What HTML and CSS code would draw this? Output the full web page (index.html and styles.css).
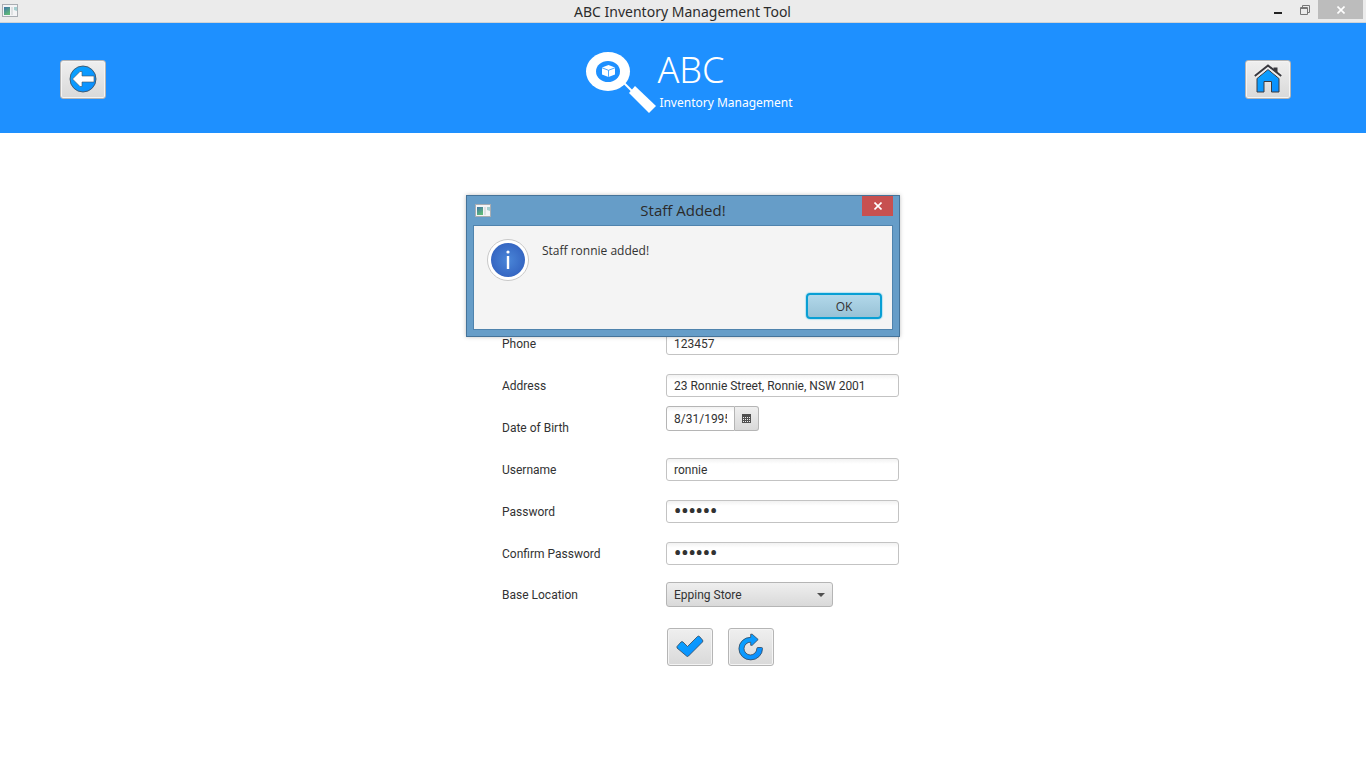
FILE: index.html
```
<!DOCTYPE html>
<html lang="en">
<head>
<meta charset="utf-8">
<title>ABC Inventory Management Tool</title>
<link rel="stylesheet" href="styles.css">
</head>
<body>
<svg class="defs" aria-hidden="true">
  <defs>
    <linearGradient id="pane" x1="0" y1="0" x2="0.5" y2="1"><stop offset="0" stop-color="#3f74a8"/><stop offset="1" stop-color="#5fb878"/></linearGradient>
    <linearGradient id="azure" x1="0" y1="0" x2="1" y2="1"><stop offset="0" stop-color="#0aa5ff"/><stop offset="1" stop-color="#0a8cff"/></linearGradient>
    <radialGradient id="info"><stop offset="0" stop-color="#4a86d8"/><stop offset="1" stop-color="#3566c2"/></radialGradient>
    <symbol id="app" viewBox="0 0 16 13">
      <rect x="0.5" y="0.5" width="15" height="12" fill="#f4f4f6" stroke="#a9adb2"/>
      <rect x="2" y="3" width="6" height="8" fill="url(#pane)"/>
      <rect x="9" y="3" width="2" height="8" fill="#dfe1e3"/>
      <path d="M12 3h3v4l-3-1z" fill="#a5cfd0"/>
    </symbol>
  </defs>
</svg>

<header class="titlebar">
  <svg class="app-icon" aria-hidden="true"><use href="#app"/></svg>
  <h1 class="window-title">ABC Inventory Management Tool</h1>
  <div class="window-controls">
    <button class="win-btn win-min" aria-label="Minimize"><svg width="8" height="10"><path d="M0 8h8" stroke="#222" stroke-width="2"/></svg></button>
    <button class="win-btn win-restore" aria-label="Restore"><svg width="10" height="10" fill="none" stroke="#777"><path d="M2.500 2.500v-2h7v7h-2"/><path d="M.5 2.500h7v7h-7zM1 3.500h6"/></svg></button>
    <button class="win-btn win-close" aria-label="Close"><svg width="8" height="8" stroke="#fff" stroke-width="1.600"><path d="M.5.5l7 7M7.5.5l-7 7"/></svg></button>
  </div>
</header>

<nav class="banner">
  <button class="icon-btn" aria-label="Back">
    <svg width="28" height="30" viewBox="0 0 28 30"><circle cx="14" cy="14" r="13" fill="url(#azure)" stroke="#3d5468" stroke-width=".9"/><path d="M3.500 14l7.500-7.500h2v4.500h12v6h-12v4.500h-2z" fill="#fff" stroke="#45525e" stroke-width=".6"/></svg>
  </button>
  <div class="logo">
    <svg class="logo-mark" width="71" height="62" viewBox="0 0 71 62" aria-hidden="true">
      <path d="M38 31l8 8" stroke="#fff" stroke-width="2"/>
      <ellipse cx="22" cy="19.500" rx="22" ry="19.500" fill="#fff"/>
      <ellipse cx="22" cy="19.500" rx="12" ry="10.500" fill="#1e90ff"/>
      <path d="M16 15.500l6.500-2.500 6.500 2.500v7l-6.500 2.500-6.500-2.500z" fill="#fff"/>
      <path d="M16 15.800l6.500 2.500 6.500-2.500M22.500 18.300v6.500" fill="none" stroke="#1e90ff" stroke-width=".8"/>
      <path d="M43 41l6-7 21 20-7 7z" fill="#fff"/>
    </svg>
    <div class="logo-text">
      <span class="logo-name">ABC</span>
      <span class="logo-sub">Inventory Management</span>
    </div>
  </div>
  <button class="icon-btn" aria-label="Home">
    <svg width="28" height="31" viewBox="0 0 28 31"><path d="M3 14.500L14 5.500l11 9V28h-7.500V17.500h-7.500V28H3z" fill="url(#azure)" stroke="#3b3b40"/><path d="M1 12L14 1.500 27 12" fill="none" stroke="#eee" stroke-width="5"/><path d="M19.500 3.500h4v6l-4-3z" fill="#39393f"/><path d="M.8 12L14 1.500 27.200 12" fill="none" stroke="#39393f" stroke-width="2"/></svg>
  </button>
</nav>

<main class="page">
  <form class="staff-form">
    <div class="row"><label for="phone">Phone</label><input class="field" id="phone" type="text" value="123457"></div>
    <div class="row"><label for="address">Address</label><input class="field" id="address" type="text" value="23 Ronnie Street, Ronnie, NSW 2001"></div>
    <div class="row"><label for="dob">Date of Birth</label>
      <div class="date-picker">
        <input class="field date-field" id="dob" type="text" value="8/31/1995">
        <button class="date-btn" type="button" aria-label="Open calendar"><svg width="9" height="9"><path d="M0 0h9v9H0z" fill="#505050"/><path d="M1 3.500h7M1 5.500h7M1 7.500h7" stroke="#eee" stroke-dasharray="1 1"/></svg></button>
      </div>
    </div>
    <div class="row"><label for="username">Username</label><input class="field" id="username" type="text" value="ronnie"></div>
    <div class="row"><label for="password">Password</label><input class="field secret" id="password" type="password" value="ronnie"></div>
    <div class="row"><label for="confirm">Confirm Password</label><input class="field secret" id="confirm" type="password" value="ronnie"></div>
    <div class="row row-last"><label for="location">Base Location</label>
      <div class="combo">
        <select class="combo-select" id="location"><option>Epping Store</option></select>
        <svg class="combo-arrow" width="8" height="4" aria-hidden="true"><path d="M0 0h8L4 4z" fill="#505050"/></svg>
      </div>
    </div>
    <div class="actions">
      <button class="icon-btn" type="button" aria-label="Submit"><svg width="28" height="24" viewBox="0 0 28 24"><path d="M1 11.500l4-4.500q1-.8 2 0l4.500 4.500L21.500 1.500q1-.8 2 0l3 3.500q.8 1 0 2L12.500 21q-1 1-2 0L1 13z" fill="url(#azure)" stroke="#34465a" stroke-width=".8"/></svg></button>
      <button class="icon-btn" type="button" aria-label="Reset"><svg width="26" height="28" viewBox="0 0 26 28"><path d="M12.700 1.200h1.500L20.200 6.500l-6 5.800h-1.500V9.200A6.400 6.400 0 1 0 18.800 15.500q.2-1 1-1h3.700q1 0 1 1A11.800 11.300 0 1 1 12.700 4.300z" fill="url(#azure)" stroke="#34465a" stroke-width=".8"/></svg></button>
    </div>
  </form>
</main>

<section class="dialog" role="dialog" aria-labelledby="dialog-title">
  <div class="dialog-bar">
    <svg class="app-icon" aria-hidden="true"><use href="#app"/></svg>
    <h2 class="dialog-title" id="dialog-title">Staff Added!</h2>
    <button class="dialog-close" aria-label="Close"><svg width="8" height="8" stroke="#fff" stroke-width="1.600"><path d="M.5.5l7 7M7.5.5l-7 7"/></svg></button>
  </div>
  <div class="dialog-body">
    <div class="dialog-content">
      <svg width="42" height="42" aria-hidden="true"><circle cx="21" cy="21" r="20.500" fill="#fff" stroke="#c8c8c8"/><circle cx="21" cy="21" r="17" fill="url(#info)"/><path d="M21 17v13" stroke="#fff" stroke-width="2.400"/><circle cx="21" cy="13" r="1.600" fill="#fff"/></svg>
      <p class="dialog-message">Staff ronnie added!</p>
    </div>
    <button class="ok-btn">OK</button>
  </div>
</section>
</body>
</html>
```

FILE: styles.css
```
* { box-sizing: border-box; }

body {
  margin: 0;
  background: #fff;
  color: #323232;
  font-family: Roboto, sans-serif;
  font-size: 12px;
}

button, input, select { font: inherit; color: inherit; margin: 0; }
button { display: flex; align-items: center; justify-content: center; padding: 0; }
svg { display: block; flex: none; }
.defs { position: absolute; width: 0; height: 0; }
.app-icon { width: 16px; height: 13px; }

.titlebar {
  display: grid;
  grid-template-columns: 1fr auto 1fr;
  height: 23px;
  padding: 0 3px 0 2px;
  background: #ebebeb;
  border-bottom: 1px solid #cfd3d6;
}
.titlebar .app-icon { margin-top: 4px; }
.window-title, .dialog-title {
  margin: 0;
  color: #2b2b2b;
  font: 400 14px/23px "Noto Sans", sans-serif;
}
.window-controls { display: flex; justify-content: flex-end; align-items: flex-start; }
.win-btn { width: 27px; height: 19px; border: 0; background: none; }
.win-close { width: 45px; background: #bcbcbc; }

.banner {
  display: flex;
  justify-content: space-between;
  align-items: flex-start;
  height: 110px;
  padding: 37px 75px 0 60px;
  background: #1e90ff;
}
.icon-btn {
  width: 46px;
  height: 39px;
  border: 1px solid #b5b5b5;
  border-radius: 3px;
  background: linear-gradient(#efefef, #d9d9d9);
  box-shadow: inset 0 0 0 1px #f4f4f4;
}
.logo { display: flex; margin-top: -8px; padding-left: 28px; color: #fff; }
.logo-text {
  display: flex;
  flex-direction: column;
  font-family: "Noto Sans", sans-serif;
}
.logo-name { font-size: 36px; line-height: 36px; font-weight: 300; }
.logo-sub { padding-left: 2px; font-size: 12px; line-height: 30px; }

.page { display: flex; justify-content: center; padding: 189px 0 0 35px; }
.staff-form { width: 397px; }
.row {
  display: grid;
  grid-template-columns: 164px 1fr;
  align-items: center;
  height: 42px;
}
.row label { padding-top: 2px; }
.row-last { height: 41px; }
.row-last label { padding-top: 0; }
.field {
  width: 100%;
  height: 23px;
  padding: 2px 7px 0;
  border: 1px solid #c3c3c3;
  border-radius: 3px;
  background: linear-gradient(#f2f2f2, #fff 5px);
}
.secret { padding-top: 0; font-size: 20px; font-weight: 700; }
.date-picker { display: flex; align-self: start; }
.date-field { width: 69px; height: 25px; border-color: #b5b5b5; border-radius: 3px 0 0 3px; padding: 0 7px; }
.date-btn {
  width: 24px;
  height: 25px;
  border: 1px solid #b5b5b5;
  border-left: 0;
  border-radius: 0 3px 3px 0;
  background: linear-gradient(#efefef, #d9d9d9);
}
.combo { position: relative; width: 167px; }
.combo-select {
  display: block;
  width: 100%;
  height: 25px;
  padding: 0 7px;
  appearance: none;
  border: 1px solid #b5b5b5;
  border-radius: 3px;
  background: linear-gradient(#efefef, #d9d9d9);
}
.combo-arrow { position: absolute; right: 8px; top: 11px; pointer-events: none; }
.actions { display: flex; gap: 15px; padding: 13px 0 0 165px; }
.actions .icon-btn { height: 38px; }

.dialog {
  position: absolute;
  top: 195px;
  left: 50%;
  width: 434px;
  transform: translateX(-50%);
  padding: 0 6px 6px;
  border: 1px solid #457399;
  background: #669dc8;
  box-shadow: 0 0 4px rgba(0, 0, 0, .25);
}
.dialog-bar { display: grid; grid-template-columns: 1fr auto 1fr; height: 29px; }
.dialog-bar .app-icon { margin: 8px 0 0 2px; }
.dialog-title { font-family: "Open Sans", sans-serif; font-size: 15px; line-height: 29px; }
.dialog-close { justify-self: end; width: 31px; height: 20px; border: 0; background: #c75050; }
.dialog-body {
  display: flex;
  flex-direction: column;
  gap: 12px;
  padding: 13px 10px 10px 13px;
  border: 1px solid #4f83ad;
  background: #f4f4f4;
}
.dialog-content { display: flex; gap: 13px; }
.dialog-message { margin: 3px 0 0; font: 12px/18px "Open Sans", sans-serif; }
.ok-btn {
  align-self: flex-end;
  width: 76px;
  height: 26px;
  border: 2px solid #089fd4;
  border-radius: 4px;
  background: linear-gradient(#b2d8ea, #98c2d6);
  box-shadow: 0 0 1px 1px #b9e3f2;
  font-family: "Open Sans", sans-serif;
}
```
